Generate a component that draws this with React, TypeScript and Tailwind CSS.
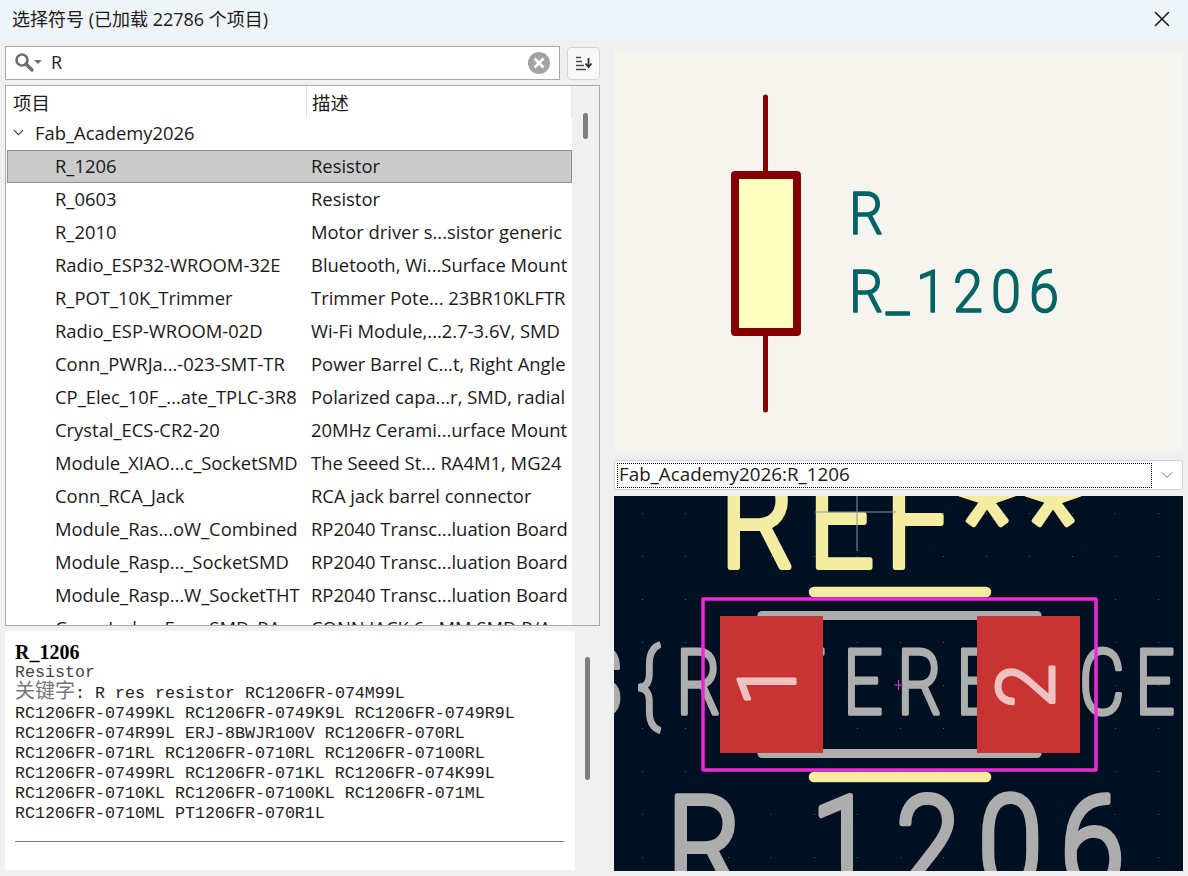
import { ChevronDown, X } from "lucide-react";

const rows = [
  ["R_1206", "Resistor"],
  ["R_0603", "Resistor"],
  ["R_2010", "Motor driver s...sistor generic"],
  ["Radio_ESP32-WROOM-32E", "Bluetooth, Wi...Surface Mount"],
  ["R_POT_10K_Trimmer", "Trimmer Pote... 23BR10KLFTR"],
  ["Radio_ESP-WROOM-02D", "Wi-Fi Module,...2.7-3.6V, SMD"],
  ["Conn_PWRJa...-023-SMT-TR", "Power Barrel C...t, Right Angle"],
  ["CP_Elec_10F_...ate_TPLC-3R8", "Polarized capa...r, SMD, radial"],
  ["Crystal_ECS-CR2-20", "20MHz Cerami...urface Mount"],
  ["Module_XIAO...c_SocketSMD", "The Seeed St... RA4M1, MG24"],
  ["Conn_RCA_Jack", "RCA jack barrel connector"],
  ["Module_Ras...oW_Combined", "RP2040 Transc...luation Board"],
  ["Module_Rasp..._SocketSMD", "RP2040 Transc...luation Board"],
  ["Module_Rasp...W_SocketTHT", "RP2040 Transc...luation Board"],
  ["Conn_Jack_...Fem_SMD_RA", "CONN JACK 6...MM SMD R/A"],
];

const keywordLines = [
  "RC1206FR-07499KL RC1206FR-0749K9L RC1206FR-0749R9L",
  "RC1206FR-074R99L ERJ-8BWJR100V RC1206FR-070RL",
  "RC1206FR-071RL RC1206FR-0710RL RC1206FR-07100RL",
  "RC1206FR-07499RL RC1206FR-071KL RC1206FR-074K99L",
  "RC1206FR-0710KL RC1206FR-07100KL RC1206FR-071ML",
  "RC1206FR-0710ML PT1206FR-070R1L",
];

const gridX = Array.from({ length: 14 }, (_, i) => 28 + i * 43);
const gridY = Array.from({ length: 9 }, (_, i) => 17 + i * 43);

// KiCad's stroke font: light Roboto, squeezed and with a round outline
function StrokeText(props: { text: string; xs: number[]; y: number; size: number; sx: number; sw: number; color: string }) {
  const { text, xs, y, size, sx, sw, color } = props;
  return (
    <text
      x={xs.map((x) => x / sx).join(" ")}
      y={y}
      transform={`scale(${sx} 1)`}
      fontFamily="Roboto, sans-serif"
      fontWeight="300"
      fontSize={size}
      fill={color}
      stroke={color}
      strokeWidth={sw}
      strokeLinejoin="round"
    >
      {text}
    </text>
  );
}

function SymbolPreview() {
  return (
    <svg width="569" height="400" viewBox="614 51 569 400" className="block bg-[#f5f4ef]">
      <line x1="765.5" y1="97" x2="765.5" y2="410" stroke="#840000" strokeWidth="5" strokeLinecap="round" />
      <rect x="735" y="175" width="62" height="157" fill="#ffffc2" stroke="#840000" strokeWidth="8" strokeLinejoin="round" />
      <StrokeText text="R" xs={[849]} y={234} size={60} sx={0.9} sw={1.6} color="#006464" />
      <StrokeText text="R_1206" xs={[849, 886, 916, 953, 991, 1029]} y={312} size={60} sx={0.9} sw={1.6} color="#006464" />
    </svg>
  );
}

function FootprintPreview() {
  return (
    <svg width="569" height="375" viewBox="614 496 569 375" className="block bg-[#001023]">
      {gridY.map((y) =>
        gridX.map((x) => <rect key={`${x}-${y}`} x={614 + x} y={496 + y} width="1" height="1" fill="#55606e" />),
      )}
      <StrokeText text="REF" xs={[720, 808, 885]} y={567} size={132} sx={0.88} sw={6} color="#f4eda1" />
      <StrokeText text="**" xs={[959, 1025]} y={566} size={132} sx={1} sw={5} color="#f4eda1" />
      <line x1="815" y1="512" x2="896" y2="512" stroke="#8b93a0" strokeWidth="1" />
      <line x1="857" y1="496" x2="857" y2="551" stroke="#8b93a0" strokeWidth="1" />
      <line x1="814" y1="592" x2="986" y2="592" stroke="#f4eda1" strokeWidth="10.5" strokeLinecap="round" />
      <line x1="814" y1="777" x2="986" y2="777" stroke="#f4eda1" strokeWidth="10.5" strokeLinecap="round" />
      <line x1="762" y1="615.5" x2="1037" y2="615.5" stroke="#adadad" strokeWidth="9" strokeLinecap="round" />
      <line x1="762" y1="753.5" x2="1037" y2="753.5" stroke="#adadad" strokeWidth="9" strokeLinecap="round" />
      <StrokeText
        text="${REFERENCE}"
        xs={[584, 637, 676, 730, 786, 843, 897, 956, 1016, 1079, 1135, 1195]}
        y={714}
        size={90}
        sx={0.78}
        sw={3.5}
        color="#adadad"
      />
      <StrokeText text="R_1206" xs={[667, 745, 811, 896, 978, 1060]} y={890} size={132} sx={0.88} sw={6} color="#adadad" />
      <rect x="703" y="599" width="393" height="171" fill="none" stroke="#f427d8" strokeWidth="3.5" strokeLinejoin="round" />
      <rect x="720" y="616" width="103" height="137" fill="#c83434" />
      <rect x="977" y="616" width="103" height="137" fill="#c83434" />
      <g fontFamily="Roboto, sans-serif" fontWeight="300" fill="#efc1c1" stroke="#efc1c1" strokeWidth="3" strokeLinejoin="round" fontSize="80">
        <text transform="translate(795 706) rotate(-90)">1</text>
        <text transform="translate(1054 708) rotate(-90)">2</text>
      </g>
      <line x1="894" y1="685" x2="903" y2="685" stroke="#f427d8" strokeWidth="1" />
      <line x1="898.5" y1="680" x2="898.5" y2="690" stroke="#f427d8" strokeWidth="1" />
    </svg>
  );
}

export default function App() {
  return (
    <div className="w-[1188px] h-[876px] overflow-hidden bg-[#f0f0f0] text-[#1a1a1a] font-['Open_Sans','Noto_Sans_CJK_SC',sans-serif]">
      {/* Title bar */}
      <div className="h-[41px] px-3 pb-[3px] flex items-center justify-between bg-[#eff4f9]">
        <span className="text-[18px]">选择符号 (已加载 22786 个项目)</span>
        <X className="w-[26px] h-[26px] mr-[1px] text-[#1a1a1a]" strokeWidth={1.4} />
      </div>

      <div className="flex">
        {/* Left column */}
        <div className="w-[614px] pl-[5px] flex flex-col">
          <div className="mt-[5px] flex items-center">
            <div className="w-[555px] h-[34px] bg-white border border-[#a9a9a9] flex items-center pl-2 pr-[9px]">
              <svg width="30" height="22" viewBox="0 0 30 22" className="shrink-0">
                <circle cx="8" cy="8" r="5.5" fill="none" stroke="#6e6e6e" strokeWidth="2.6" />
                <line x1="12" y1="12" x2="18" y2="18" stroke="#6e6e6e" strokeWidth="3.4" strokeLinecap="round" />
                <path d="M20 8h8l-4 4z" fill="#6e6e6e" />
              </svg>
              <span className="ml-[7px] flex-1 text-[18px] leading-[24px] pb-[2px] text-[#222]">R</span>
              <svg width="22" height="22" viewBox="0 0 22 22" className="shrink-0">
                <circle cx="11" cy="11" r="11" fill="#a3a3a3" />
                <path d="M6.5 6.5l9 9M15.5 6.5l-9 9" stroke="#fff" strokeWidth="2.6" />
              </svg>
            </div>
            <button className="ml-[7px] w-[33px] h-[33px] rounded-[4px] border border-[#d4d4d4] bg-[#f8f8f8] flex items-center justify-center">
              <svg width="18" height="16" viewBox="0 0 18 16">
                <path d="M1 2.5h5M1 6.5h6M1 10.5h8M1 14.5h10" stroke="#4a4a4a" strokeWidth="1.6" />
                <path d="M13.5 3v8M10.5 8.5l3 3.5 3-3.5" stroke="#333" strokeWidth="1.8" fill="none" />
              </svg>
            </button>
          </div>

          {/* Symbol tree */}
          <div className="mt-[5px] w-[595px] h-[541px] border border-[#a9a9a9] bg-white flex overflow-hidden">
            <div className="w-[566px] h-full overflow-hidden text-[18.4px] leading-[31px]">
              <div className="h-[32px] flex leading-[33px]">
                <div className="w-[301px] pl-[7px] border-r border-[#e5e5e5]">项目</div>
                <div className="pl-[5px] flex-1 border-r border-[#e5e5e5]">描述</div>
              </div>
              <div className="h-[32px] flex items-center pl-[4px] pb-[3px]">
                <ChevronDown className="w-[17px] h-[17px] mr-[8px] text-[#333]" strokeWidth={1.6} />
                Fab_Academy2026
              </div>
              {rows.map(([name, desc], i) => (
                <div
                  key={name}
                  className={
                    i === 0
                      ? "h-[33px] ml-[1px] flex whitespace-nowrap bg-[#cacaca] border border-[#8f8f8f] leading-[29px]"
                      : "h-[33px] ml-[1px] flex whitespace-nowrap"
                  }
                >
                  <div className={i === 0 ? "w-[303px] pl-[47px] shrink-0 overflow-hidden" : "w-[304px] pl-[48px] shrink-0 overflow-hidden"}>{name}</div>
                  <div className="overflow-hidden">{desc}</div>
                </div>
              ))}
            </div>
            <div className="flex-1 bg-[#f0f0f0] pt-[27px] pl-[11px]">
              <div className="w-[5px] h-[26px] rounded-full bg-[#7f7f7f]" />
            </div>
          </div>

          {/* Details */}
          <div className="mt-[5px] flex">
            <div className="w-[570px] h-[239px] bg-white px-[10px] pt-[10px] font-['Liberation_Mono','Noto_Sans_CJK_SC',monospace] text-[16.67px] leading-[20px] text-[#222] whitespace-nowrap">
              <div className="font-bold text-[#000] font-['Liberation_Serif','Noto_Sans_CJK_SC',serif] text-[20px] leading-[22px]">R_1206</div>
              <div className="text-[#444]">Resistor</div>
              <div><span className="text-[#777] text-[20px] leading-[20px]">关键字</span>: R res resistor RC1206FR-074M99L</div>
              {keywordLines.map((l) => (
                <div key={l}>{l}</div>
              ))}
              <div className="mt-[17px] mr-[1px] border-t border-[#808080]" />
            </div>
            <div className="pl-[10px] pt-[26px]">
              <div className="w-[5px] h-[123px] rounded-full bg-[#7f7f7f]" />
            </div>
          </div>
        </div>

        {/* Right column */}
        <div className="w-[569px] pt-[10px] flex flex-col">
          <SymbolPreview />
          <div className="mt-[9px] h-[30px] bg-white border border-[#d4d4d4] rounded-[2px] flex items-center pl-[2px] pr-[5px]">
            <div className="flex-1 h-[25px] border border-dotted border-black text-[18.8px] leading-[21px] pl-[1px] whitespace-nowrap">Fab_Academy2026:R_1206</div>
            <ChevronDown className="ml-[5px] w-[20px] h-[20px] text-[#777]" strokeWidth={1.2} />
          </div>
          <div className="mt-[6px]">
            <FootprintPreview />
          </div>
        </div>
      </div>
    </div>
  );
}
